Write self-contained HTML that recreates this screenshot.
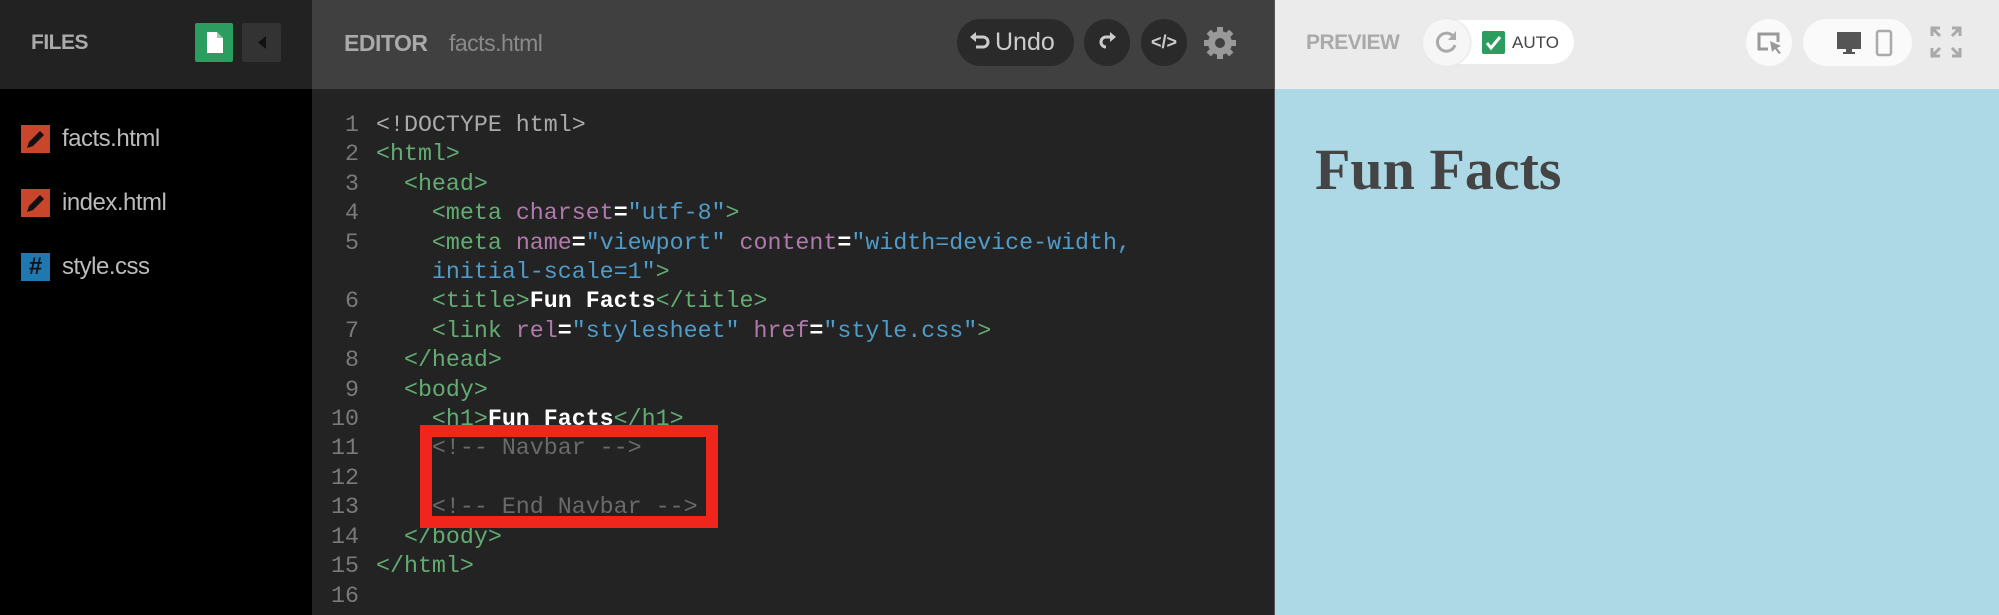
<!DOCTYPE html>
<html><head><style>
*{margin:0;padding:0;box-sizing:border-box}
body{width:1999px;height:615px;overflow:hidden;position:relative;background:#232323;font-family:"Liberation Sans",sans-serif}
.a{position:absolute}
.code{font-family:"Liberation Mono",monospace;font-size:23.3px;line-height:29.4px;white-space:pre}
.t{color:#62ac72}.at{color:#b07aac}.s{color:#4f9bc9}.w{color:#fff;font-weight:bold}.c{color:#6a6a6a}.p{color:#ccc}
.ln{color:#7a7a7a;text-align:right;width:47px}
.circ{background:#2a2a2a;border-radius:24px}
</style></head><body>
<div class="a" style="left:0;top:0;width:312px;height:89px;background:#222"></div>
<div class="a" style="left:0;top:89px;width:312px;height:526px;background:#000"></div>
<div class="a" style="left:31px;top:31px;font-size:21px;font-weight:bold;color:#aaa;letter-spacing:-0.5px">FILES</div>
<div class="a" style="left:195px;top:23px;width:38px;height:39px;background:#2a9d5f;border-radius:2px">
<svg width="38" height="39" viewBox="0 0 38 39"><path d="M12 9h10l6 6v15H12z" fill="#fff"/><path d="M22 9v6h6" fill="#2a9d5f" opacity=".5"/></svg></div>
<div class="a" style="left:242px;top:23px;width:39px;height:39px;background:#333;border-radius:2px">
<svg width="39" height="39"><path d="M24 13v13l-8-6.5z" fill="#111"/></svg></div>
<div class="a" style="left:21px;top:125px;width:29px;height:28px;background:#c9452c"></div>
<div class="a" style="left:21px;top:189px;width:29px;height:28px;background:#c9452c"></div>
<svg class="a" style="left:21px;top:125px" width="29" height="28"><path d="M6 23l2-6 11-11 4 4-11 11z" fill="#111"/></svg>
<svg class="a" style="left:21px;top:189px" width="29" height="28"><path d="M6 23l2-6 11-11 4 4-11 11z" fill="#111"/></svg>
<div class="a" style="left:21px;top:253px;width:29px;height:28px;background:#1f78b0;color:#111;font-weight:bold;font-size:24px;text-align:center;line-height:28px">#</div>
<div class="a" style="left:62px;top:124px;font-size:24px;color:#bbb;line-height:30px;letter-spacing:-0.5px">facts.html</div>
<div class="a" style="left:62px;top:188px;font-size:24px;color:#bbb;line-height:30px;letter-spacing:-0.5px">index.html</div>
<div class="a" style="left:62px;top:252px;font-size:24px;color:#bbb;line-height:30px;letter-spacing:-0.5px">style.css</div>
<div class="a" style="left:312px;top:0;width:962px;height:89px;background:#404040"></div>
<div class="a" style="left:344px;top:30px;font-size:23px;font-weight:bold;color:#aaa;letter-spacing:-0.5px">EDITOR</div>
<div class="a" style="left:449px;top:30px;font-size:23px;color:#8a8a8a;letter-spacing:-0.5px">facts.html</div>
<div class="a circ" style="left:957px;top:19px;width:117px;height:47px;color:#ccc;font-size:25px;line-height:47px;padding-left:13px">
<svg width="22" height="22" style="vertical-align:-3px;margin-right:3px"><path d="M4 6h9a5 5 0 010 10H6" fill="none" stroke="#ccc" stroke-width="3"/><path d="M0 6l6-5v10z" fill="#ccc"/></svg>Undo</div>
<div class="a circ" style="left:1084px;top:19px;width:46px;height:47px"><svg width="46" height="47"><path d="M28 18h-6a5 5 0 000 10h0" fill="none" stroke="#ccc" stroke-width="3"/><path d="M32 18l-6-5v10z" fill="#ccc"/></svg></div>
<div class="a circ" style="left:1141px;top:19px;width:46px;height:47px;color:#ccc;font-size:18px;font-weight:bold;line-height:47px;text-align:center">&lt;/&gt;</div>
<svg class="a" style="left:1202px;top:25px" width="36" height="36" viewBox="0 0 36 36"><g fill="#999"><circle cx="18" cy="18" r="12"/><rect x="15" y="2" width="6" height="32"/><rect x="2" y="15" width="32" height="6"/><rect x="15" y="2" width="6" height="32" transform="rotate(45 18 18)"/><rect x="15" y="2" width="6" height="32" transform="rotate(-45 18 18)"/></g><circle cx="18" cy="18" r="5" fill="#404040"/></svg>
<div class="a code ln" style="left:312px;top:111px">1
2
3
4
5

6
7
8
9
10
11
12
13
14
15
16</div>
<div class="a code" style="left:376px;top:111px"><span style="color:#aaa">&lt;!DOCTYPE html&gt;</span>
<span class="t">&lt;html&gt;</span>
  <span class="t">&lt;head&gt;</span>
    <span class="t">&lt;meta</span> <span class="at">charset</span><span class="w">=</span><span class="s">"utf-8"</span><span class="t">&gt;</span>
    <span class="t">&lt;meta</span> <span class="at">name</span><span class="w">=</span><span class="s">"viewport"</span> <span class="at">content</span><span class="w">=</span><span class="s">"width=device-width,</span>
    <span class="s">initial-scale=1"</span><span class="t">&gt;</span>
    <span class="t">&lt;title&gt;</span><span class="w">Fun Facts</span><span class="t">&lt;/title&gt;</span>
    <span class="t">&lt;link</span> <span class="at">rel</span><span class="w">=</span><span class="s">"stylesheet"</span> <span class="at">href</span><span class="w">=</span><span class="s">"style.css"</span><span class="t">&gt;</span>
  <span class="t">&lt;/head&gt;</span>
  <span class="t">&lt;body&gt;</span>
    <span class="t">&lt;h1&gt;</span><span class="w">Fun Facts</span><span class="t">&lt;/h1&gt;</span>
    <span class="c">&lt;!-- Navbar --&gt;</span>

    <span class="c">&lt;!-- End Navbar --&gt;</span>
  <span class="t">&lt;/body&gt;</span>
<span class="t">&lt;/html&gt;</span>
</div>
<div class="a" style="left:420px;top:425px;width:298px;height:103px;border:12px solid #f0261c"></div>
<div class="a" style="left:1274px;top:0;width:725px;height:89px;background:#ebebeb"></div>
<div class="a" style="left:1274px;top:89px;width:725px;height:526px;background:#add8e6"></div>
<div class="a" style="left:1274px;top:0;width:1px;height:615px;background:#555"></div>
<div class="a" style="left:1306px;top:31px;font-size:21px;font-weight:bold;color:#aaa;letter-spacing:-0.5px">PREVIEW</div>
<div class="a" style="left:1440px;top:20px;width:134px;height:44px;background:#fff;border-radius:22px"></div>
<div class="a" style="left:1423px;top:19px;width:47px;height:47px;background:#f6f6f6;border-radius:50%;box-shadow:1px 0 2px #ddd"><svg width="47" height="47"><path d="M30 17a9 9 0 1 0 2 9" fill="none" stroke="#aaa" stroke-width="3"/><path d="M33 12v9h-8z" fill="#aaa"/></svg></div>
<div class="a" style="left:1482px;top:31px;width:23px;height:23px;background:#2a9d5f;border-radius:2px"><svg width="23" height="23"><path d="M5 12l4 5 9-11" fill="none" stroke="#fff" stroke-width="3"/></svg></div>
<div class="a" style="left:1512px;top:31px;font-size:17px;color:#444;line-height:23px">AUTO</div>
<div class="a" style="left:1746px;top:19px;width:46px;height:47px;background:#fafafa;border-radius:50%"><svg width="46" height="47"><path d="M22 30h-9V15h19v8" fill="none" stroke="#999" stroke-width="3"/><path d="M24 22l11 5-4 2 4 5-2 1-4-5-3 3z" fill="#999"/></svg></div>
<div class="a" style="left:1803px;top:19px;width:109px;height:47px;background:#fafafa;border-radius:24px"><svg width="109" height="47"><rect x="34" y="13" width="24" height="17" fill="#555"/><rect x="43" y="30" width="6" height="3" fill="#555"/><rect x="40" y="33" width="12" height="2" fill="#555"/><rect x="74" y="12" width="14" height="24" rx="2" fill="none" stroke="#aaa" stroke-width="2.5"/></svg></div>
<svg class="a" style="left:1930px;top:26px" width="32" height="32"><g stroke="#aaa" stroke-width="3" fill="none"><path d="M2 10V2h8M2 2l8 8M30 10V2h-8M30 2l-8 8M2 22v8h8M2 30l8-8M30 22v8h-8M30 30l-8-8"/></g></svg>
<div class="a" style="left:1315px;top:136px;font-family:'Liberation Serif','DejaVu Serif',serif;font-weight:bold;font-size:58px;color:#444;letter-spacing:0px">Fun Facts</div>
</body></html>
